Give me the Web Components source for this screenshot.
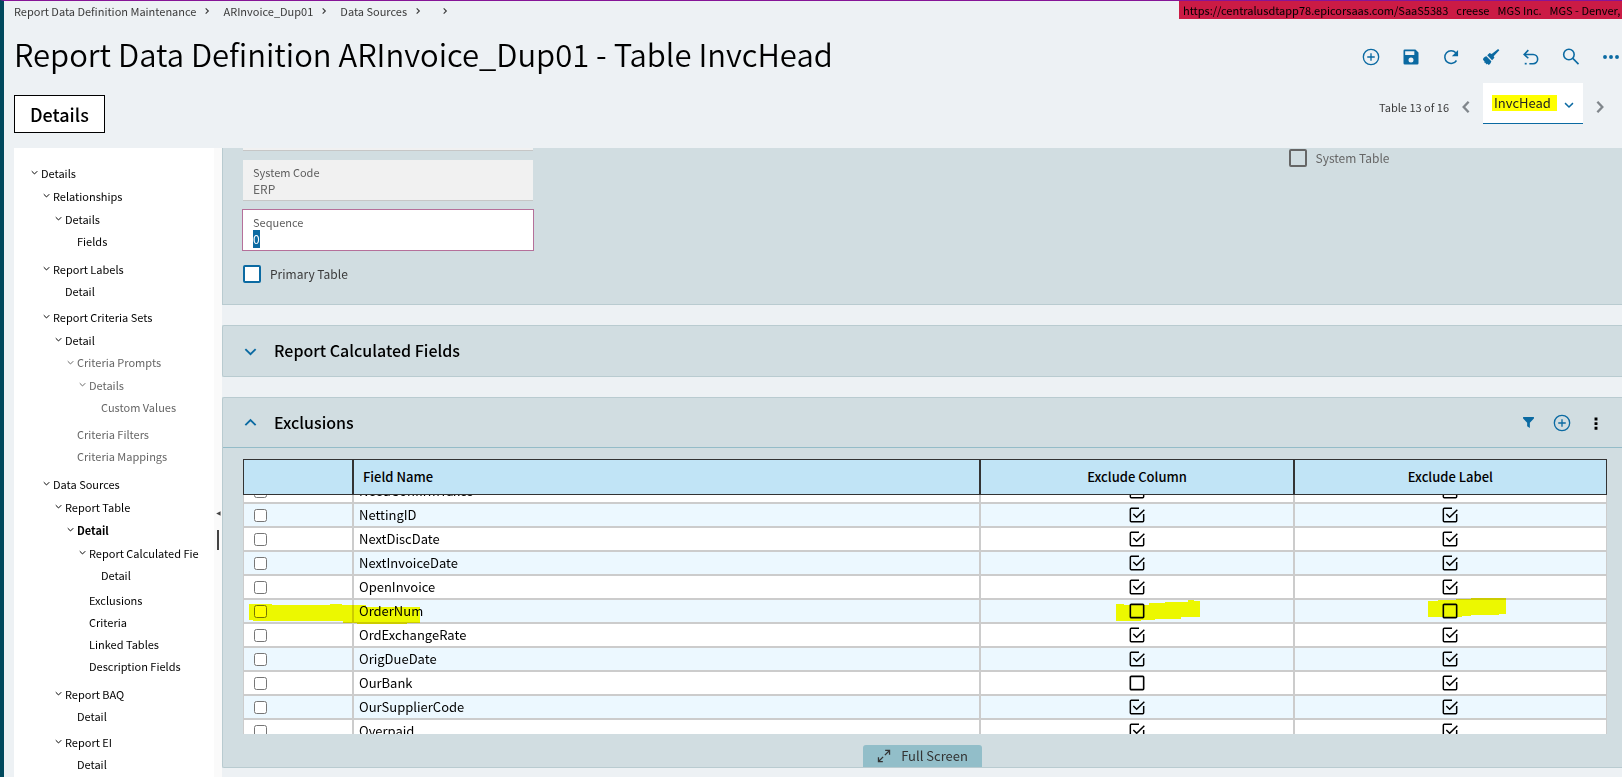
<!DOCTYPE html>
<html lang="en">
<head>
<meta charset="utf-8">
<title>Report Data Definition Maintenance</title>
<style>
    html, body {
        margin: 0;
        height: 100%;
    }
    body {
        overflow: hidden;
        background: #edf1f4;
        color: #000;
        font-family: "Noto Sans CJK SC", "Noto Sans", sans-serif;
        font-size: 13px;
        line-height: 18px;
    }
</style>
</head>
<body>
<report-app></report-app>

<script>
const ICONS = {
    add: '<g fill="none" stroke="currentColor" stroke-width="1.6"><circle cx="12" cy="12" r="9.2"/><path d="M12 7.5v9M7.5 12h9"/></g>',
    save: '<path fill="currentColor" fill-rule="evenodd" d="M4.5 3h12.8L21 6.700V19.500a1.500 1.500 0 0 1-1.500 1.500h-15A1.500 1.500 0 0 1 3 19.500v-15A1.500 1.500 0 0 1 4.500 3zM5 5v4.500h11V5zM12 12.500a3 3 0 1 0 0 6 3 3 0 0 0 0-6z"/>',
    refresh: '<path fill="none" stroke="currentColor" stroke-width="1.800" d="M18.600 16.200A7.600 7.600 0 1 1 17.800 7"/><path fill="currentColor" d="M20.500 3.500v7.500H13z"/>',
    broom: '<path fill="currentColor" d="M20.500 2.500l1.500 1.500-6.800 7 .9 2-2.800 2.800-5.800-5.800L10.300 7.200l2.500 1.100zM6.500 11.200l5.900 5.900c-.5 2-1.600 3.500-3 4.600L7.500 20l-.7 1-2-2.500-1 .3.400-1.600-1.700-1.600C2 13.500 4 12 6.500 11.200z"/>',
    undo: '<path fill="none" stroke="currentColor" stroke-width="1.900" d="M10 20h4.500a5.500 5.500 0 0 0 0-11H5M8.800 3.800L3.800 9l5 4.500"/><path fill="currentColor" d="M4.500 19h2.300v2H4.500z"/>',
    search: '<g fill="none" stroke="currentColor" stroke-width="1.900"><circle cx="9.500" cy="9" r="6.300"/><path d="M14.200 13.700l6.800 6.800"/></g>',
    more: '<g fill="currentColor"><circle cx="3" cy="12" r="2.900"/><circle cx="12" cy="12" r="2.900"/><circle cx="21" cy="12" r="2.900"/></g>',
    kebab: '<g fill="currentColor"><path d="M9.500 2.500h5v5h-5zM9.500 10.500h5v5h-5zM9.500 18.500h5v5h-5z"/></g>',
    filter: '<path fill="currentColor" d="M2 2h20v2.500l-7.500 8V22l-5-3v-6.500L2 4.500z"/>',
    left: '<path fill="none" stroke="currentColor" stroke-width="4" d="M16.500 3L8 12l8.500 9"/>',
    right: '<path fill="none" stroke="currentColor" stroke-width="4" d="M7.500 3L16 12l-8.500 9"/>',
    crumb: '<path fill="none" stroke="currentColor" stroke-width="3.400" d="M8 4l8 8-8 8"/>',
    down: '<path fill="none" stroke="currentColor" stroke-width="3.400" d="M2.500 7.500L12 17l9.500-9.500"/>',
    up: '<path fill="none" stroke="currentColor" stroke-width="3.400" d="M2.500 17L12 7.500 21.500 17"/>',
    expand: '<g fill="none" stroke="currentColor" stroke-width="2.200"><path d="M13.500 10.500L21 3M14 2.500h7.500V10M10.500 13.500L3 21M2.500 14v7.500H10"/></g>',
    collapse: '<path fill="currentColor" d="M22 1v22L1 12z"/>',
    boxon: '<g fill="none" stroke="currentColor" stroke-width="2.200"><path d="M15 2H3.500A1.500 1.500 0 0 0 2 3.500v17A1.500 1.500 0 0 0 3.500 22h17a1.500 1.500 0 0 0 1.500-1.500V10.500"/><path d="M6.500 10.500l5 5L23 4"/></g>',
    boxoff: '<rect x="2" y="2" width="20" height="20" rx="1.500" fill="none" stroke="currentColor" stroke-width="2.400"/>'
};

class UiIcon extends HTMLElement {
    connectedCallback() {
        const size = this.getAttribute('size') || 20;
        this.attachShadow({ mode: 'open' });
        this.shadowRoot.innerHTML = `
            <style>
                :host { display: inline-flex; flex: none; }
                svg { display: block; }
            </style>
            <svg width="${size}" height="${size}" viewBox="0 0 24 24" aria-hidden="true">${ICONS[this.getAttribute('name')]}</svg>
        `;
    }
}

class IconButton extends HTMLElement {
    connectedCallback() {
        this.attachShadow({ mode: 'open' });
        this.shadowRoot.innerHTML = `
            <style>
                :host { display: inline-flex; flex: none; color: #0b6aa2; }
                button {
                    width: var(--button-width, 40px);
                    height: 24px;
                    padding: 0;
                    border: 0;
                    background: none;
                    color: inherit;
                    display: flex;
                    align-items: center;
                    justify-content: center;
                }
            </style>
            <button type="button" aria-label="${this.getAttribute('label')}">
                <ui-icon name="${this.getAttribute('icon')}" size="${this.getAttribute('size') || 20}"></ui-icon>
            </button>
        `;
    }
}

class CrumbTrail extends HTMLElement {
    connectedCallback() {
        const items = this.getAttribute('items').split('|');
        this.attachShadow({ mode: 'open' });
        this.shadowRoot.innerHTML = `
            <style>
                :host { display: block; }
                nav { display: flex; font-size: 11px; }
                .crumb { display: flex; align-items: center; gap: 7px; margin-right: 12px; color: #3a3a3a; }
                a { color: inherit; text-decoration: none; }
            </style>
            <nav aria-label="Breadcrumb">
                ${items.map(item => `<span class="crumb">${item ? `<a href="#">${item}</a>` : '<span></span>'}<ui-icon name="crumb" size="8"></ui-icon></span>`).join('')}
            </nav>
        `;
    }
}

class EnvBanner extends HTMLElement {
    connectedCallback() {
        this.attachShadow({ mode: 'open' });
        this.shadowRoot.innerHTML = `
            <style>
                :host {
                    display: block;
                    width: 443px;
                    height: 18px;
                    overflow: hidden;
                    background: #cb1b45;
                    font-size: 11px;
                    white-space: nowrap;
                }
                div { display: flex; gap: 8px; padding-left: 4px; }
                ::slotted(span) { flex: none; }
            </style>
            <div><slot></slot></div>
        `;
    }
}

class RecordPager extends HTMLElement {
    connectedCallback() {
        this.attachShadow({ mode: 'open' });
        this.shadowRoot.innerHTML = `
            <style>
                :host { display: flex; align-items: center; font-size: 11px; color: #3a3a3a; }
                .position, icon-button { padding-top: 7px; }
                icon-button { --button-width: 34px; color: #80868b; }
                .pick {
                    display: grid;
                    align-items: center;
                    box-sizing: border-box;
                    width: 100px;
                    height: 41px;
                    padding: 0 9px;
                    background: #fff;
                    border-bottom: 1px solid #0b6aa2;
                }
                .pick > * { grid-area: 1 / 1; }
                select {
                    appearance: none;
                    width: 65px;
                    height: 16px;
                    padding: 0 2px;
                    border: 0;
                    background: #ff0;
                    color: #222;
                    font: 13px/16px "Noto Sans CJK SC", sans-serif;
                }
                .pick ui-icon { justify-self: end; padding-top: 3px; color: #0b6aa2; }
            </style>
            <span class="position">${this.getAttribute('position')}</span>
            <icon-button icon="left" size="14" label="Previous record"></icon-button>
            <span class="pick">
                <select aria-label="Table"><option>${this.getAttribute('value')}</option></select>
                <ui-icon name="down" size="10"></ui-icon>
            </span>
            <icon-button icon="right" size="14" label="Next record"></icon-button>
        `;
    }
}

const TREE = [
    { text: 'Details', items: [
        { text: 'Relationships', items: [
            { text: 'Details', items: [{ text: 'Fields' }] }
        ] },
        { text: 'Report Labels', items: [{ text: 'Detail' }] },
        { text: 'Report Criteria Sets', items: [
            { text: 'Detail', items: [
                { text: 'Criteria Prompts', muted: true, items: [
                    { text: 'Details', items: [{ text: 'Custom Values' }] }
                ] },
                { text: 'Criteria Filters', muted: true },
                { text: 'Criteria Mappings', muted: true }
            ] }
        ] },
        { text: 'Data Sources', items: [
            { text: 'Report Table', items: [
                { text: 'Detail', current: true, items: [
                    { text: 'Report Calculated Fie', items: [{ text: 'Detail' }] },
                    { text: 'Exclusions' },
                    { text: 'Criteria' },
                    { text: 'Linked Tables' },
                    { text: 'Description Fields' }
                ] }
            ] },
            { text: 'Report BAQ', items: [{ text: 'Detail' }] },
            { text: 'Report EI', items: [{ text: 'Detail' }] }
        ] }
    ] }
];

class NavTree extends HTMLElement {
    connectedCallback() {
        this.attachShadow({ mode: 'open' });
        this.shadowRoot.innerHTML = `
            <style>
                :host {
                    display: block;
                    box-sizing: border-box;
                    padding: 13px 16px;
                    background: #fff;
                    font-size: 11px;
                    white-space: nowrap;
                }
                ul { list-style: none; margin: 0; padding: 0 0 2px; }
                ul ul { padding-left: 12px; }
                li.branch + li { margin-top: 1px; }
                li.muted { color: #666; }
                a {
                    display: flex;
                    align-items: center;
                    gap: 3px;
                    height: 22px;
                    padding-left: 11px;
                    color: inherit;
                    text-decoration: none;
                }
                .branch > a { height: 23px; padding-left: 1px; }
                .muted.branch > a { height: 22px; }
                .current > a { font-weight: 700; }
            </style>
            <nav aria-label="Sections">${this.list(TREE)}</nav>
        `;
    }
    list(items) {
        return `<ul>${items.map(item => this.item(item)).join('')}</ul>`;
    }
    item(item) {
        const names = [item.items && 'branch', item.muted && 'muted', item.current && 'current'].filter(Boolean).join(' ');
        return `<li class="${names}"><a href="#">${item.items ? '<ui-icon name="down" size="7"></ui-icon>' : ''}${item.text}</a>${item.items ? this.list(item.items) : ''}</li>`;
    }
}

class SplitHandle extends HTMLElement {
    connectedCallback() {
        this.attachShadow({ mode: 'open' });
        this.shadowRoot.innerHTML = `
            <style>
                :host {
                    display: flex;
                    flex-direction: column;
                    align-items: center;
                    justify-content: center;
                    gap: 14px;
                    padding-top: 136px;
                    background: #fafafa;
                    color: #444;
                }
                .grip { width: 2px; height: 20px; background: #444; }
            </style>
            <ui-icon name="collapse" size="5"></ui-icon>
            <span class="grip"></span>
        `;
    }
}

class CardPanel extends HTMLElement {
    connectedCallback() {
        const heading = this.getAttribute('heading');
        const open = this.hasAttribute('open');
        this.attachShadow({ mode: 'open' });
        this.shadowRoot.innerHTML = `
            <style>
                :host {
                    display: block;
                    background: #d1dde1;
                    border: 1px solid #b9cbd0;
                    border-right: 0;
                    border-radius: 2px 0 0 2px;
                }
                header { display: flex; align-items: center; height: 50px; padding: 0 9px 0 21px; }
                header.open { height: 49px; border-bottom: 1px solid #94bcc8; }
                h2 { flex: 1; margin: 0; padding-bottom: 2px; font-size: 16px; font-weight: 500; line-height: 24px; }
                .toggle {
                    display: flex;
                    width: 30px;
                    height: 24px;
                    padding: 0;
                    border: 0;
                    background: none;
                    align-items: center;
                    color: #0b6aa2;
                }
            </style>
            ${heading ? `
            <header class="${open ? 'open' : ''}">
                <button class="toggle" type="button" aria-label="${open ? 'Collapse' : 'Expand'} ${heading}">
                    <ui-icon name="${open ? 'up' : 'down'}" size="13"></ui-icon>
                </button>
                <h2>${heading}</h2>
                <slot name="actions"></slot>
            </header>` : ''}
            <slot></slot>
        `;
    }
}

class TextField extends HTMLElement {
    connectedCallback() {
        const disabled = this.hasAttribute('disabled');
        const active = this.hasAttribute('active');
        this.attachShadow({ mode: 'open' });
        this.shadowRoot.innerHTML = `
            <style>
                :host { display: block; max-width: 290px; }
                .field {
                    display: flex;
                    flex-direction: column;
                    gap: 1px;
                    box-sizing: border-box;
                    height: 41px;
                    padding: 4px 10px 0;
                    background: #fff;
                }
                .disabled { background: #f1f1f1; border-bottom: 1px solid #c6c6c6; }
                .active { height: 40px; gap: 0; outline: 1px solid #b5709a; }
                label { font-size: 11px; line-height: 16px; color: #5c5c5c; }
                input {
                    width: 100%;
                    height: 16px;
                    padding: 0;
                    border: 0;
                    background: none;
                    color: #666;
                    font: 12px/18px "Noto Sans CJK SC", sans-serif;
                }
                .active input {
                    align-self: flex-start;
                    width: auto;
                    height: 18px;
                    min-width: 0;
                    field-sizing: content;
                    background: #0b6aa2;
                    color: #fff;
                }
            </style>
            <div class="field ${disabled ? 'disabled' : ''} ${active ? 'active' : ''}">
                <label for="box">${this.getAttribute('label')}</label>
                <input id="box" value="${this.getAttribute('value')}" ${disabled ? 'disabled' : ''}>
            </div>
        `;
    }
}

class CheckField extends HTMLElement {
    connectedCallback() {
        const disabled = this.hasAttribute('disabled');
        this.attachShadow({ mode: 'open' });
        this.shadowRoot.innerHTML = `
            <style>
                :host { display: block; }
                label { display: flex; align-items: center; gap: 9px; font-size: 12px; line-height: 20px; color: #3a3a3a; }
                input {
                    appearance: none;
                    box-sizing: border-box;
                    width: 18px;
                    height: 18px;
                    margin: 0;
                    border: 2px solid #0b6aa2;
                    border-radius: 2px;
                    background: #fff;
                }
                .disabled { color: #666; }
                .disabled input { border-color: #666; background: none; }
            </style>
            <label class="${disabled ? 'disabled' : ''}"><input type="checkbox" ${disabled ? 'disabled' : ''}>${this.getAttribute('label')}</label>
        `;
    }
}

/* field name, exclude column, exclude label */
const ROWS = [
    ['NeedConfirmTaxes', 1, 1],
    ['NettingID', 1, 1],
    ['NextDiscDate', 1, 1],
    ['NextInvoiceDate', 1, 1],
    ['OpenInvoice', 1, 1],
    ['OrderNum', 0, 0],
    ['OrdExchangeRate', 1, 1],
    ['OrigDueDate', 1, 1],
    ['OurBank', 0, 1],
    ['OurSupplierCode', 1, 1],
    ['Overpaid', 1, 1]
];

/* marker strokes drawn over the OrderNum row */
const MARKS = {
    row: '<svg class="mark row" width="172" height="20"><path d="M0 0h23v1h58v-1h12v1h24v2h54v16h-13v1h-50v-1h-14v-2H4v-1H0z"/></svg>',
    column: '<svg class="mark column" width="84" height="22"><path d="M0 4h8v1h25v-2h16v-1h23v-2h6v1h6v16h-19v2h-26v1h-14v1H0z"/></svg>',
    label: '<svg class="mark label" width="78" height="19"><path d="M0 3h10v-1h18v-1h15v-1h35v16h-7v1h-28v1h-9v1H0z"/></svg>'
};

class ExclusionGrid extends HTMLElement {
    connectedCallback() {
        this.attachShadow({ mode: 'open' });
        this.shadowRoot.innerHTML = `
            <style>
                :host { display: block; }
                .scroll { height: 275px; overflow: hidden; }
                table { width: 100%; table-layout: fixed; border-collapse: separate; border-spacing: 0; }
                .pick { width: 110px; }
                .name { width: 46%; }
                th {
                    position: sticky;
                    top: 0;
                    z-index: 2;
                    box-sizing: border-box;
                    height: 36px;
                    padding: 0 9px;
                    border: 1px solid #333;
                    background: #c1e4f6;
                    font-size: 13px;
                    font-weight: 500;
                }
                th.name { text-align: left; }
                td {
                    position: relative;
                    box-sizing: border-box;
                    height: 24px;
                    padding: 0 5px;
                    border: 1px solid #ccc;
                    background: #fff;
                    line-height: 20px;
                }
                tr:nth-child(even) td { background: #ecf8ff; }
                td > input { display: block; margin: 0 0 0 5px; }
                .tick { display: grid; justify-content: center; }
                .tick > * { grid-area: 1 / 1; }
                .tick input { appearance: none; width: 16px; height: 16px; margin: 0; }
                .mark { position: absolute; z-index: 1; mix-blend-mode: multiply; fill: #ff0; pointer-events: none; }
                .mark.row { left: 5px; top: 4px; }
                .mark.column { left: calc(50% - 21px); top: 0; }
                .mark.label { left: calc(50% - 22px); top: -2px; }
            </style>
            <div class="scroll">
                <table>
                    <thead>
                        <tr>
                            <th class="pick" aria-label="Select"></th>
                            <th class="name">Field Name</th>
                            <th>Exclude Column</th>
                            <th>Exclude Label</th>
                        </tr>
                    </thead>
                    <tbody>${ROWS.map(row => this.row(row)).join('')}</tbody>
                </table>
            </div>
        `;
        this.shadowRoot.querySelector('.scroll').scrollTop = 16;
    }
    row([name, column, label]) {
        const marked = name === 'OrderNum';
        return `
            <tr>
                <td><input type="checkbox" aria-label="Select ${name}">${marked ? MARKS.row : ''}</td>
                <td>${name}</td>
                <td>${this.tick(column, `Exclude column ${name}`)}${marked ? MARKS.column : ''}</td>
                <td>${this.tick(label, `Exclude label ${name}`)}${marked ? MARKS.label : ''}</td>
            </tr>`;
    }
    tick(on, label) {
        return `<label class="tick"><input type="checkbox" aria-label="${label}" ${on ? 'checked' : ''}><ui-icon name="${on ? 'boxon' : 'boxoff'}" size="16"></ui-icon></label>`;
    }
}

class ReportApp extends HTMLElement {
    connectedCallback() {
        this.attachShadow({ mode: 'open' });
        this.shadowRoot.innerHTML = `
            <style>
                :host {
                    display: flex;
                    flex-direction: column;
                    box-sizing: border-box;
                    height: 100vh;
                    overflow: hidden;
                    padding-left: 10px;
                    border-top: 1px solid #861597;
                    border-left: 4px solid #00495d;
                }
                .top { display: flex; justify-content: space-between; height: 21px; }
                crumb-trail { padding-top: 1px; }
                .title { display: flex; align-items: flex-start; justify-content: space-between; height: 61px; }
                h1 { margin: 0; padding-top: 12px; font-size: 31px; font-weight: 350; line-height: 40px; white-space: nowrap; }
                .tools { display: flex; margin-right: -9px; padding-top: 23px; }
                .tabs { display: flex; align-items: flex-start; justify-content: space-between; height: 65px; }
                record-pager { margin-right: 5px; }
                .tab {
                    box-sizing: border-box;
                    height: 38px;
                    margin-top: 12px;
                    padding: 0 15px;
                    border: 1px solid #000;
                    background: #fff;
                    color: #000;
                    font: 500 18px/34px "Noto Sans CJK SC", sans-serif;
                }
                main { display: grid; grid-template-columns: 200px 8px 1fr; flex: 1; min-height: 0; }
                nav-tree, .content { min-height: 0; overflow: hidden; }
                .content { display: flex; flex-direction: column; gap: 20px; }
                .content > * { flex: none; }
                .first { border-top: 0; border-radius: 0; }
                .form {
                    display: grid;
                    grid-template-columns: repeat(4, 1fr);
                    gap: 30px;
                    padding: 0 15px 20px 20px;
                }
                .fields { display: flex; flex-direction: column; gap: 9px; }
                .scrolled { height: 2px; max-width: 290px; background: #f1f1f1; border-bottom: 1px solid #c6c6c6; }
                .fields check-field { padding-top: 5px; }
                .system { grid-column: 4; }
                exclusion-grid { padding: 11px 15px 0 20px; }
                .actions { display: flex; align-items: center; --button-width: 34px; }
                .black { color: #000; }
                .full {
                    display: flex;
                    align-items: center;
                    justify-content: center;
                    gap: 10px;
                    width: 119px;
                    height: 22px;
                    margin: 11px auto 0;
                    padding: 0;
                    border: 0;
                    border-radius: 3px 3px 0 0;
                    background: #92bec9;
                    color: #333;
                    font: 13px/20px "Noto Sans CJK SC", sans-serif;
                }
            </style>
            <div class="top">
                <crumb-trail items="Report Data Definition Maintenance|ARInvoice_Dup01|Data Sources|"></crumb-trail>
                <env-banner>
                    <span>https://centralusdtapp78.epicorsaas.com/SaaS5383</span>
                    <span>creese</span>
                    <span>MGS Inc.</span>
                    <span>MGS - Denver,</span>
                </env-banner>
            </div>
            <div class="title">
                <h1>Report Data Definition ARInvoice_Dup01 - Table InvcHead</h1>
                <div class="tools">
                    <icon-button icon="add" label="New"></icon-button>
                    <icon-button icon="save" label="Save"></icon-button>
                    <icon-button icon="refresh" label="Refresh"></icon-button>
                    <icon-button icon="broom" label="Clear"></icon-button>
                    <icon-button icon="undo" label="Undo"></icon-button>
                    <icon-button icon="search" label="Search"></icon-button>
                    <icon-button icon="more" size="16" label="More"></icon-button>
                </div>
            </div>
            <div class="tabs">
                <button class="tab" type="button">Details</button>
                <record-pager position="Table 13 of 16" value="InvcHead"></record-pager>
            </div>
            <main>
                <nav-tree></nav-tree>
                <split-handle></split-handle>
                <div class="content">
                    <card-panel class="first">
                        <div class="form">
                            <div class="fields">
                                <div class="scrolled"></div>
                                <text-field label="System Code" value="ERP" disabled></text-field>
                                <text-field label="Sequence" value="0" active></text-field>
                                <check-field label="Primary Table"></check-field>
                            </div>
                            <check-field class="system" label="System Table" disabled></check-field>
                        </div>
                    </card-panel>
                    <card-panel heading="Report Calculated Fields"></card-panel>
                    <card-panel heading="Exclusions" open>
                        <div class="actions" slot="actions">
                            <icon-button icon="filter" size="13" label="Filter"></icon-button>
                            <icon-button icon="add" label="Add"></icon-button>
                            <icon-button class="black" icon="kebab" size="14" label="More actions"></icon-button>
                        </div>
                        <exclusion-grid></exclusion-grid>
                        <button class="full" type="button"><ui-icon name="expand" size="14"></ui-icon>Full Screen</button>
                    </card-panel>
                </div>
            </main>
        `;
    }
}

customElements.define('ui-icon', UiIcon);
customElements.define('icon-button', IconButton);
customElements.define('crumb-trail', CrumbTrail);
customElements.define('env-banner', EnvBanner);
customElements.define('record-pager', RecordPager);
customElements.define('nav-tree', NavTree);
customElements.define('split-handle', SplitHandle);
customElements.define('card-panel', CardPanel);
customElements.define('text-field', TextField);
customElements.define('check-field', CheckField);
customElements.define('exclusion-grid', ExclusionGrid);
customElements.define('report-app', ReportApp);
</script>
</body>
</html>
